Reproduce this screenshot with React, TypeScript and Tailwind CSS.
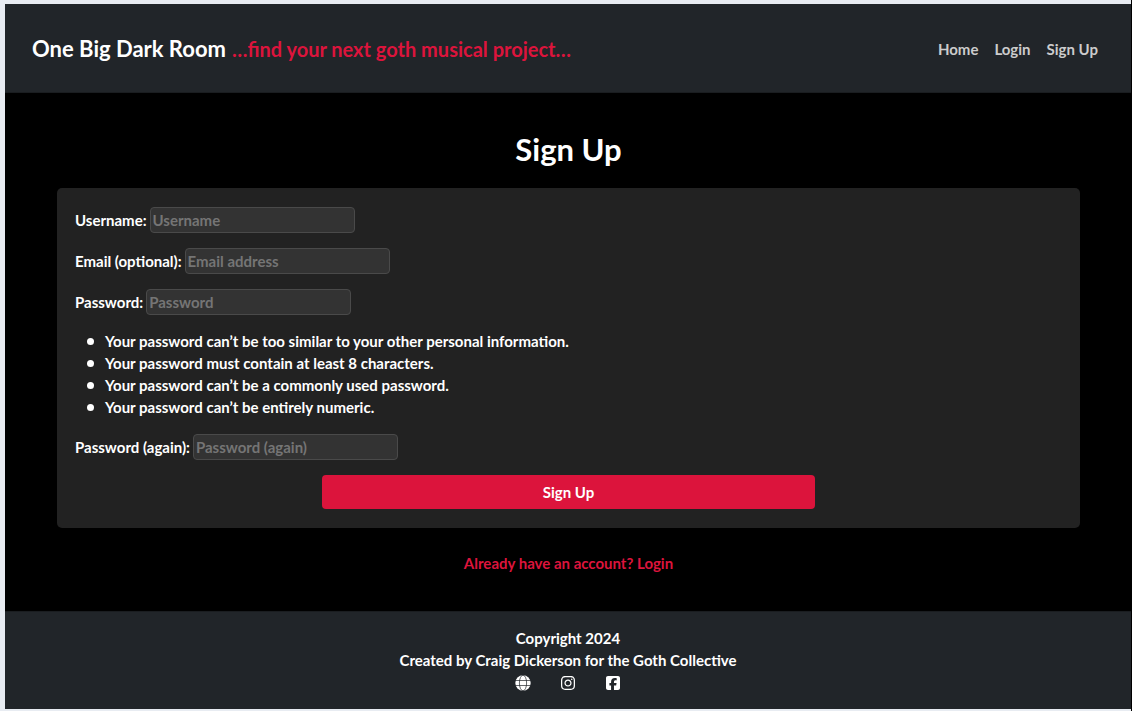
import type { InputHTMLAttributes } from "react";
import { FaInstagram, FaSquareFacebook } from "react-icons/fa6";

interface FieldProps extends InputHTMLAttributes<HTMLInputElement> {
  id: string;
  label: string;
}

function Field({ id, label, ...rest }: FieldProps) {
  return (
    <div className="flex items-center gap-[3px]">
      <label htmlFor={id}>{label}</label>
      <input
        id={id}
        name={id}
        className="h-[26px] w-[205px] rounded border border-[#4a4a4a] bg-[#333] px-[2px] text-white placeholder:text-[#757575] focus:outline-none focus:border-[#dc143c]"
        {...rest}
      />
    </div>
  );
}

function GlobeIcon() {
  return (
    <svg width="16" height="16" viewBox="0 0 16 16" aria-hidden="true">
      <circle cx="8" cy="8" r="7.7" fill="#fff" />
      <g fill="none" stroke="#212529" strokeWidth="0.7">
        <ellipse cx="8" cy="8" rx="3.6" ry="7.8" />
        <path d="M0 5.5h16M0 10.5h16" />
      </g>
    </svg>
  );
}

const passwordRules = [
  "Your password can’t be too similar to your other personal information.",
  "Your password must contain at least 8 characters.",
  "Your password can’t be a commonly used password.",
  "Your password can’t be entirely numeric.",
];

export default function App() {
  return (
    <div className="flex min-h-screen flex-col border-r border-black bg-[#e8ecf2] pt-1 pb-[2px] pl-[5px] font-['Lato','Noto_Sans',sans-serif] text-[15px] leading-[22px] font-bold text-white">
      <header className="flex h-[89px] items-center justify-between border-b border-[#1a1d20] bg-[#212529] pt-px pr-[33px] pl-[27px]">
        <a href="#home" className="flex items-baseline gap-[6px] whitespace-nowrap">
          <span className="text-[22px]">One Big Dark Room</span>
          <span className="text-[20px] text-[#dc143c]">…find your next goth musical project…</span>
        </a>
        <nav className="flex gap-4 text-[#ccc]">
          <a href="#home">Home</a>
          <a href="#login">Login</a>
          <a href="#signup">Sign Up</a>
        </nav>
      </header>

      <main className="flex grow flex-col items-center bg-black pt-[38px] pr-[51px] pl-[52px]">
        <h1 className="text-[31px] leading-[36px]">Sign Up</h1>

        <form
          className="mt-[21px] flex w-full flex-col gap-[15px] rounded-[5px] bg-[#222] px-[18px] py-[19px]"
          onSubmit={(event) => event.preventDefault()}
        >
          <Field id="username" label="Username:" placeholder="Username" autoComplete="username" />
          <Field id="email" label="Email (optional):" placeholder="Email address" type="email" />
          <Field id="password1" label="Password:" placeholder="Password" type="password" />
          <ul className="pb-px pl-3">
            {passwordRules.map((rule) => (
              <li
                key={rule}
                className="flex items-center gap-[11px] before:size-[7px] before:shrink-0 before:rounded-full before:bg-white"
              >
                {rule}
              </li>
            ))}
          </ul>
          <Field id="password2" label="Password (again):" placeholder="Password (again)" type="password" />
          <button type="submit" className="h-[34px] w-1/2 self-center rounded bg-[#dc143c]">
            Sign Up
          </button>
        </form>

        <a href="#login" className="mt-6 text-[#dc143c]">
          Already have an account? Login
        </a>
      </main>

      <footer className="flex h-[98px] flex-col items-center border-t border-[#1a1d20] bg-[#212529] pt-[15px]">
        <p>Copyright 2024</p>
        <p>Created by Craig Dickerson for the Goth Collective</p>
        <div className="flex h-6 items-center gap-[29px]">
          <a href="#website" aria-label="Website">
            <GlobeIcon />
          </a>
          <a href="#instagram" aria-label="Instagram">
            <FaInstagram size={16} />
          </a>
          <a href="#facebook" aria-label="Facebook">
            <FaSquareFacebook size={16} />
          </a>
        </div>
      </footer>
    </div>
  );
}
